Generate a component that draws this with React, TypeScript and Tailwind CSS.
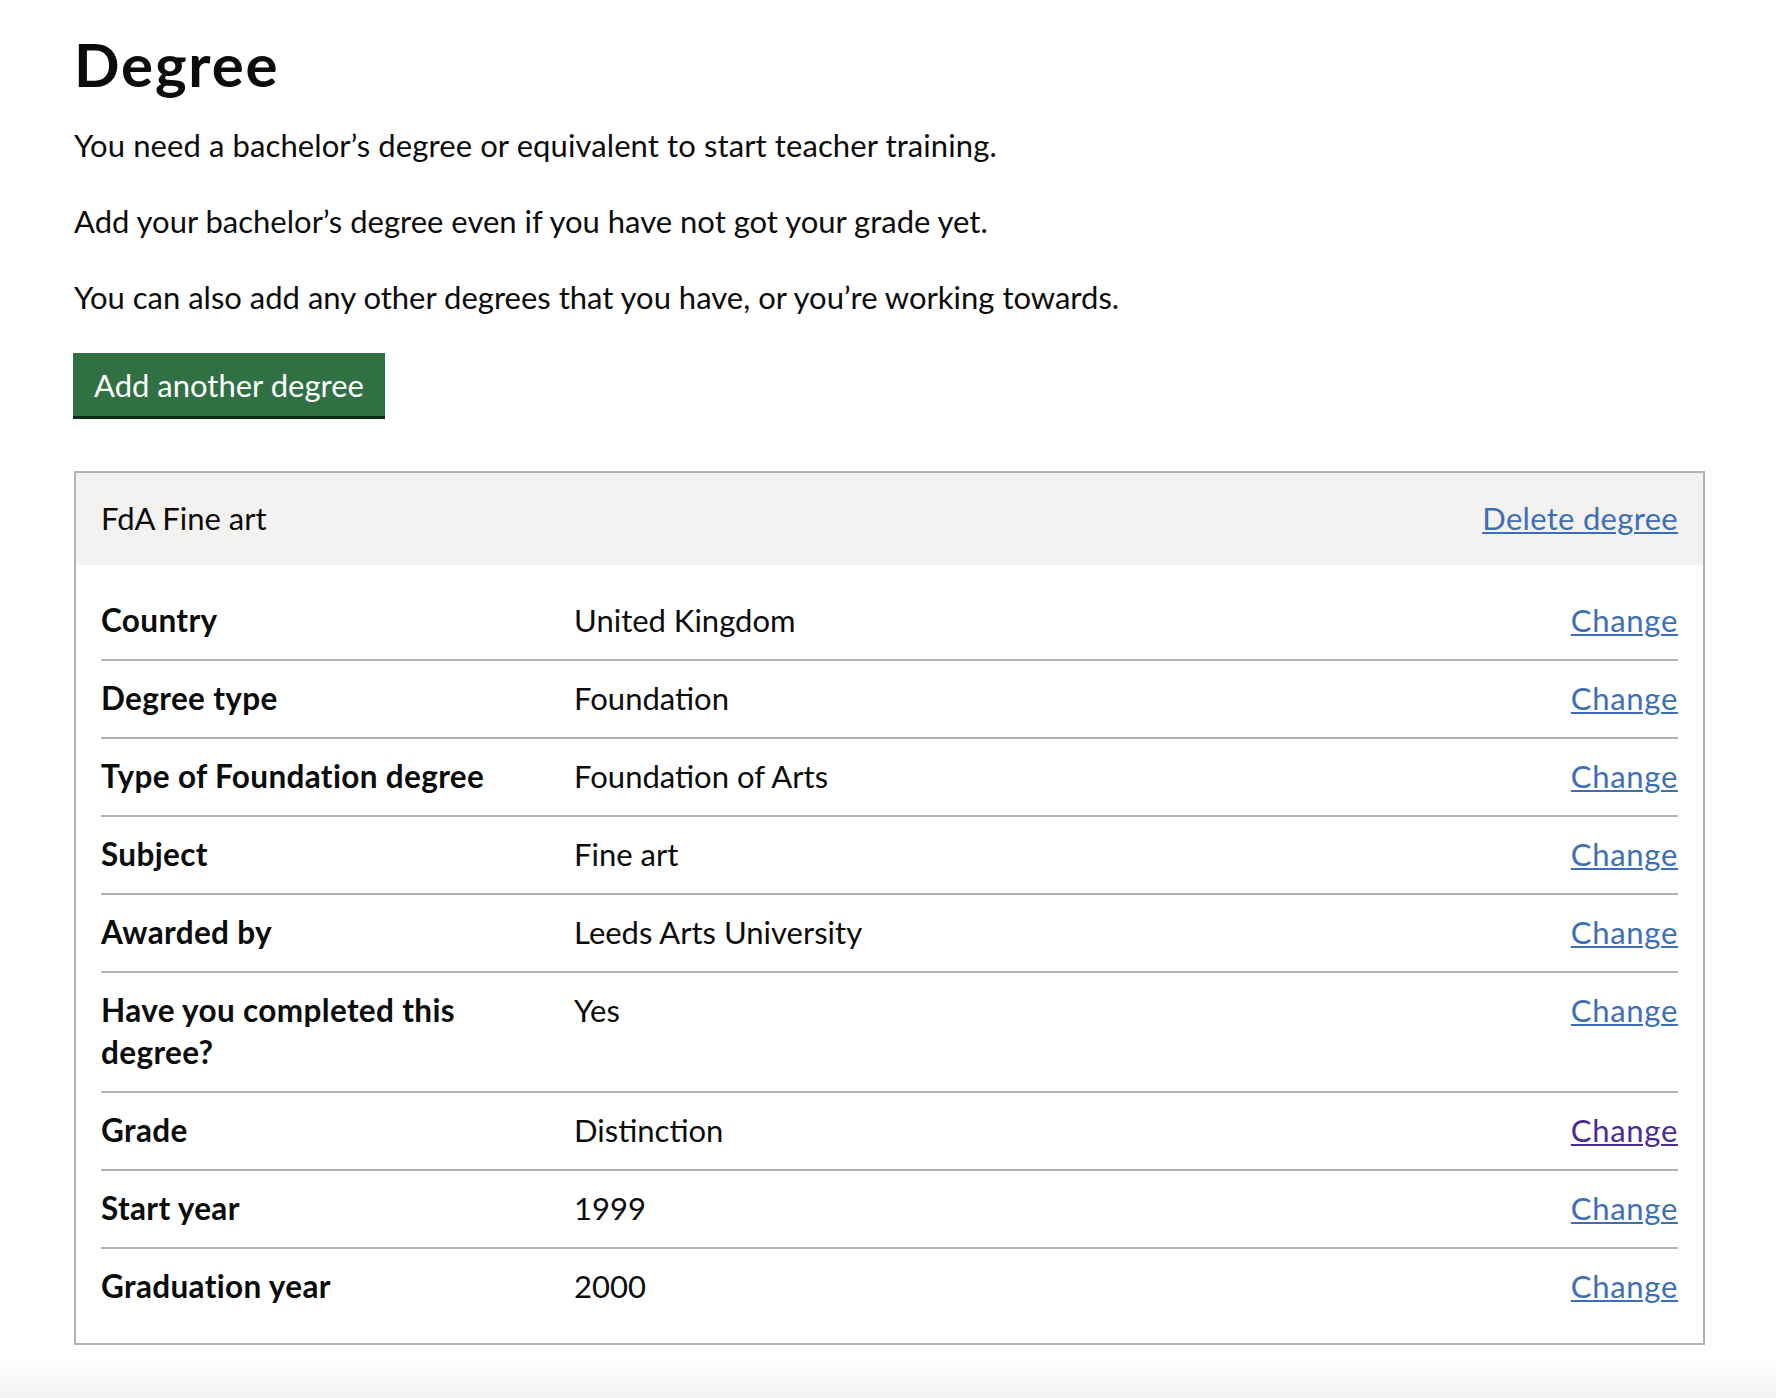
import React from "react";

type Row = { k: string; v: string; visited?: boolean };

const rows: Row[] = [
  { k: "Country", v: "United Kingdom" },
  { k: "Degree type", v: "Foundation" },
  { k: "Type of Foundation degree", v: "Foundation of Arts" },
  { k: "Subject", v: "Fine art" },
  { k: "Awarded by", v: "Leeds Arts University" },
  { k: "Have you completed this degree?", v: "Yes" },
  { k: "Grade", v: "Distinction", visited: true },
  { k: "Start year", v: "1999" },
  { k: "Graduation year", v: "2000" },
];

export default function App() {
  return (
    <div className="flex min-h-[1398px] flex-col bg-white font-[Lato,sans-serif] text-[#0b0c0c]">
      <main className="flex-1 pl-[74px] pr-[71px] pt-[31px]">
        <h1 className="m-0 text-[60px] font-bold leading-[66px] tracking-[1.8px]">Degree</h1>
        <p className="mt-[27px] text-[31px] leading-[42px] tracking-[0.1px]">
          You need a bachelor’s degree or equivalent to start teacher training.
        </p>
        <p className="mt-[34px] text-[31px] leading-[42px]">
          Add your bachelor’s degree even if you have not got your grade yet.
        </p>
        <p className="mt-[34px] text-[31px] leading-[42px]">
          You can also add any other degrees that you have, or you’re working towards.
        </p>
        <button className="-ml-px mt-[35px] block bg-[#307043] px-[21px] pb-[15px] pt-[16px] text-[31px] leading-[32px] text-white shadow-[0_3px_0_#0f2a17]">
          Add another degree
        </button>
        <section className="mt-[55px] border-2 border-[#b1b4b6]">
          <div className="flex items-start justify-between bg-[#f3f2f1] px-[25px] pb-[26px] pt-[24px] text-[31px] leading-[42px]">
            <h2 className="m-0 font-normal">FdA Fine art</h2>
            <a
              href="#"
              className="text-[#3d6fb5] tracking-[0.3px] underline decoration-2 underline-offset-2"
            >
              Delete degree
            </a>
          </div>
          <dl className="px-[25px] pb-[18px] pt-[18px] text-[31px] leading-[42px]">
            {rows.map((r, i) => (
              <div
                key={r.k}
                className={
                  i === rows.length - 1
                    ? "flex"
                    : "flex border-b-2 border-[#b1b4b6]"
                }
              >
                <dt className="w-[30%] pb-[18px] pr-[33px] pt-[16px] text-[31.5px] font-bold tracking-[0.35px]">
                  {r.k}
                </dt>
                <dd className="w-[50%] pb-[18px] pr-[33px] pt-[16px]">{r.v}</dd>
                <dd className="w-[20%] pb-[18px] pt-[16px] text-right">
                  <a
                    href="#"
                    className={
                      r.visited
                        ? "text-[#4c2c92] tracking-[0.7px] underline decoration-2 underline-offset-2"
                        : "text-[#3d6fb5] tracking-[0.7px] underline decoration-2 underline-offset-2"
                    }
                  >
                    Change
                  </a>
                </dd>
              </div>
            ))}
          </dl>
        </section>
      </main>
      <div className="h-[42px] bg-gradient-to-b from-white to-[#f1f1f1]" />
    </div>
  );
}
